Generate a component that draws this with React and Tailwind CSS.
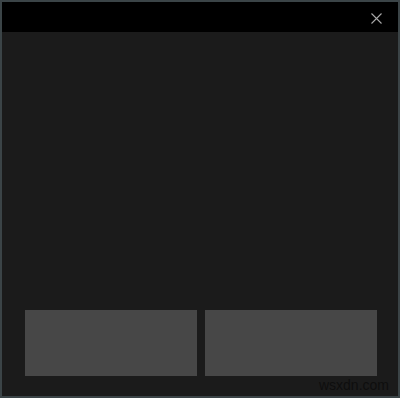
import React from 'react';

export default function App() {
  return (
    <div className="w-[400px] h-[398px] bg-[#3b4447] p-[2px] flex flex-col font-['Liberation_Sans',Arial,sans-serif]">
      <div className="h-[30px] bg-black flex items-center justify-end pr-[16px] shrink-0">
        <svg width="11" height="11" viewBox="0 0 11 11" className="mt-[2px]">
          <path d="M0.5 0.5L10.5 10.5M10.5 0.5L0.5 10.5" stroke="#a9a9a9" strokeWidth="1.1" fill="none" />
        </svg>
      </div>
      <div className="flex-1 bg-[#1b1b1b] flex flex-col justify-end pl-[23px] pr-[19px] pb-[20px] relative">
        <div className="flex gap-[8px]">
          <div className="w-[172px] h-[66px] bg-[#474747] shrink-0" />
          <div className="w-[172px] h-[66px] bg-[#474747] shrink-0" />
        </div>
        <span className="absolute right-[9px] bottom-[0px] text-[14px] text-[#0e0e0e]">wsxdn.com</span>
      </div>
    </div>
  );
}
